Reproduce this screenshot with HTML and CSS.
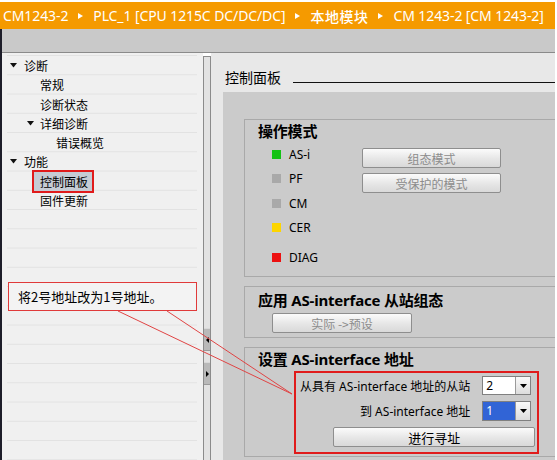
FILE: index.html
```html
<!DOCTYPE html>
<html lang="zh-CN">
<head>
<meta charset="utf-8">
<title>控制面板</title>
<link rel="stylesheet" href="styles.css">
</head>
<body>
<div class="app">
  <div class="crumb">
    <span>CM1243-2</span><i class="tri"></i><span>PLC_1 [CPU 1215C DC/DC/DC]</span><i class="tri"></i><span class="cjk">本地模块</span><i class="tri"></i><span>CM 1243-2 [CM 1243-2]</span>
  </div>
  <div class="frame">
    <div class="toolbar"></div>
    <div class="body">
      <div class="tree">
        <div class="row l0"><svg class="caret" viewBox="0 0 7 5"><path d="M0 0H7L3.5 4.5Z"/></svg>诊断</div>
        <div class="row l1">常规</div>
        <div class="row l1">诊断状态</div>
        <div class="row l1c"><svg class="caret" viewBox="0 0 7 5"><path d="M0 0H7L3.5 4.5Z"/></svg>详细诊断</div>
        <div class="row l2">错误概览</div>
        <div class="row l0"><svg class="caret" viewBox="0 0 7 5"><path d="M0 0H7L3.5 4.5Z"/></svg>功能</div>
        <div class="row lsel"><span class="sel">控制面板</span></div>
        <div class="row l1">固件更新</div>
      </div>
      <div class="splitter">
        <div class="sbtn"><svg viewBox="0 0 3 6"><path d="M3 0V6L0 3Z"/></svg></div>
        <div class="sbtn"><svg viewBox="0 0 3 6"><path d="M0 0V6L3 3Z"/></svg></div>
      </div>
      <div class="content">
        <div class="heading"><span class="htext">控制面板</span><span class="rule"></span></div>
        <div class="panel">
          <section class="group ops">
            <h2 class="gtitle">操作模式</h2>
            <div class="ops-body">
              <div class="leds">
                <div class="led-row"><i class="led green"></i>AS-i</div>
                <div class="led-row"><i class="led gray"></i>PF</div>
                <div class="led-row"><i class="led gray"></i>CM</div>
                <div class="led-row"><i class="led yellow"></i>CER</div>
                <div class="led-row diag"><i class="led red"></i>DIAG</div>
              </div>
              <div class="mode-btns">
                <button class="btn" disabled>组态模式</button>
                <button class="btn" disabled>受保护的模式</button>
              </div>
            </div>
          </section>
          <section class="group apply">
            <h2 class="gtitle">应用 AS-interface 从站组态</h2>
            <button class="btn wide" disabled>实际 -&gt;预设</button>
          </section>
          <section class="group addr">
            <h2 class="gtitle">设置 AS-interface 地址</h2>
            <div class="addr-form">
              <span class="flabel">从具有 AS-interface 地址的从站</span>
              <div class="combo"><span class="cval">2</span><span class="cbtn"><svg viewBox="0 0 7 4"><path d="M0 0H7L3.5 4Z"/></svg></span></div>
              <span class="flabel">到 AS-interface 地址</span>
              <div class="combo active"><span class="cval">1</span><span class="cbtn"><svg viewBox="0 0 7 4"><path d="M0 0H7L3.5 4Z"/></svg></span></div>
              <button class="btn go">进行寻址</button>
            </div>
          </section>
        </div>
      </div>
    </div>
  </div>
</div>
<div class="callout">将2号地址改为1号地址。</div>
<svg class="leaders" viewBox="0 0 557 460" width="557" height="460">
  <line x1="118" y1="311" x2="292" y2="394"/>
  <line x1="167" y1="311" x2="292" y2="394"/>
</svg>
</body>
</html>
```
FILE: styles.css
```css
* { box-sizing: border-box; margin: 0; padding: 0; }
html, body { width: 557px; height: 460px; overflow: hidden; background: #fff; }
body {
  position: relative;
  font-family: "Noto Sans", "Noto Sans CJK SC", sans-serif;
  color: #000;
  font-size: 12px;
}
.app { width: 555px; height: 460px; padding-top: 2px; display: flex; flex-direction: column; }

.crumb {
  height: 27px; background: #f59a00; color: #fff;
  display: flex; align-items: center; padding-left: 3px;
  font-size: 14px; white-space: nowrap; letter-spacing: -0.1px;
}
.crumb .cjk { font-family: "Noto Sans CJK SC", sans-serif; font-weight: 500; letter-spacing: 0.5px; }
.crumb .tri {
  width: 0; height: 0;
  border-top: 3.5px solid transparent; border-bottom: 3.5px solid transparent;
  border-left: 5px solid #fff; margin: 0 10px 0 10px;
}

.frame { flex: 1; display: flex; flex-direction: column; border-left: 2px solid #1d1d29; min-height: 0; }
.toolbar { height: 24px; background: #c9c9c9; border-bottom: 1px solid #8a8a8a; flex: none; }
.body { flex: 1; display: flex; min-height: 0; }

.tree {
  width: 201px; flex: none; padding-top: 3px;
  background-color: #f0f0f0;
  background-image: linear-gradient(to bottom, transparent 18.25px, #e2e2e2 18.25px);
  background-size: 190px 19.25px; background-repeat: repeat-y; background-position: 5px 3px;
  font-family: "Noto Sans CJK SC", sans-serif;
}
.row { height: 19.25px; display: flex; align-items: center; white-space: nowrap; }
.caret { width: 7px; height: 5px; fill: #111; flex: none; }
.l0 { padding-left: 8px; }
.l0 .caret { margin-right: 7px; }
.l1 { padding-left: 38px; }
.l1c { padding-left: 25px; }
.l1c .caret { margin-right: 6px; }
.l2 { padding-left: 54px; }
.lsel { padding-left: 30px; }
.sel {
  height: 23px; display: flex; align-items: center;
  border: 2px solid #e01b1b; background: #c5ccd4;
  padding: 0 4px 0 6px;
}

.splitter {
  width: 8px; flex: none; margin-top: 3px;
  background: #e2e2e2; border: 1px solid #8b8b8b; border-bottom: none;
  display: flex; flex-direction: column; align-items: center;
  padding-top: 271px; gap: 11px;
}
.sbtn {
  width: 6px; height: 23px; background: #b9b9b9;
  border-top: 1px solid #d8d8d8; border-bottom: 1px solid #9a9a9a;
  display: flex; align-items: center; justify-content: center;
}
.sbtn svg { width: 3px; height: 6px; fill: #000; }

.content { flex: 1; background: #e8e8e8; display: flex; flex-direction: column; min-width: 0; }
.heading { display: flex; align-items: center; padding: 14px 0 0 14px; height: 34px; }
.htext { font-family: "Noto Sans CJK SC", sans-serif; font-size: 14px; line-height: 20px; }
.rule { flex: 1; height: 1px; background: #111; margin-left: 12px; margin-top: 10px; }
.panel {
  flex: 1; margin: 5px 0 0 12px; background: #cbcbcb;
  padding: 27px 0 0 21px; display: flex; flex-direction: column; gap: 9px;
  overflow: hidden;
}

.group { border: 1px solid #a9a9a9; border-right: none; flex: none; }
.gtitle {
  font-size: 15px; font-weight: bold; line-height: 18px;
  padding-left: 13px; letter-spacing: -0.2px;
  font-family: "Noto Sans", "Noto Sans CJK SC", sans-serif;
}
.ops { height: 158px; padding-top: 2px; }
.ops-body { display: flex; padding: 2px 0 0 27px; }
.leds { width: 90px; flex: none; }
.led-row { height: 24.5px; display: flex; align-items: center; gap: 8px; font-size: 12px; }
.led-row.diag { margin-top: 5px; }
.led { width: 9px; height: 9px; display: block; flex: none; }
.green { background: #14c214; }
.gray { background: #a9a9a9; }
.yellow { background: #fdd500; }
.red { background: #ec1010; }
.mode-btns { display: flex; flex-direction: column; gap: 5px; padding-top: 6px; }

.btn {
  width: 139px; height: 20px;
  font-family: "Noto Sans CJK SC", sans-serif; font-size: 12px; color: #000;
  background: linear-gradient(to bottom, #fbfbfb, #e6e6e6 55%, #d9d9d9);
  border: 1px solid #8e8e8e; border-radius: 2px;
  display: flex; align-items: center; justify-content: center;
}
.btn:disabled { color: #8c8c8c; }
.apply { height: 52px; padding: 4px 0 0 0; }
.btn.wide { width: 140px; margin: 4px 0 0 27px; }

.addr { height: 110px; padding-top: 2px; }
.addr-form {
  margin: 3px 0 0 49px; width: 245px; height: 83px;
  border: 2px solid #e01b1b;
  display: grid; grid-template-columns: 1fr 49px; column-gap: 12px; row-gap: 6px;
  grid-template-rows: 19px 20px 20px;
  padding: 3px 9px 0 4px; align-items: center;
}
.flabel { text-align: right; font-size: 12px; white-space: nowrap; }
.combo {
  height: 19px; display: flex; background: #fff; border: 1px solid #808080;
}
.combo.active { height: 20px; }
.cval { flex: 1; padding-left: 3px; font-size: 12px; line-height: 17px; }
.combo.active .cval { background: #3164d6; color: #fff; line-height: 18px; }
.cbtn {
  width: 15px; flex: none; border-left: 1px solid #9a9a9a;
  background: linear-gradient(to bottom, #fafafa, #dcdcdc);
  display: flex; align-items: center; justify-content: center;
}
.cbtn svg { width: 7px; height: 4px; fill: #000; }
.btn.go {
  grid-column: 1 / -1; width: auto; margin: 0 -4px 0 33px;
  font-size: 13px;
}

.callout {
  position: absolute; left: 8px; top: 282px; width: 189px; height: 29px;
  border: 1px solid #e03a3a; background: #f3f3f3;
  font-family: "Noto Sans CJK SC", sans-serif; font-size: 13px;
  padding-left: 9px; display: flex; align-items: center;
}
.leaders { position: absolute; left: 0; top: 0; pointer-events: none; }
.leaders line { stroke: #e04444; stroke-width: 1; }
```
